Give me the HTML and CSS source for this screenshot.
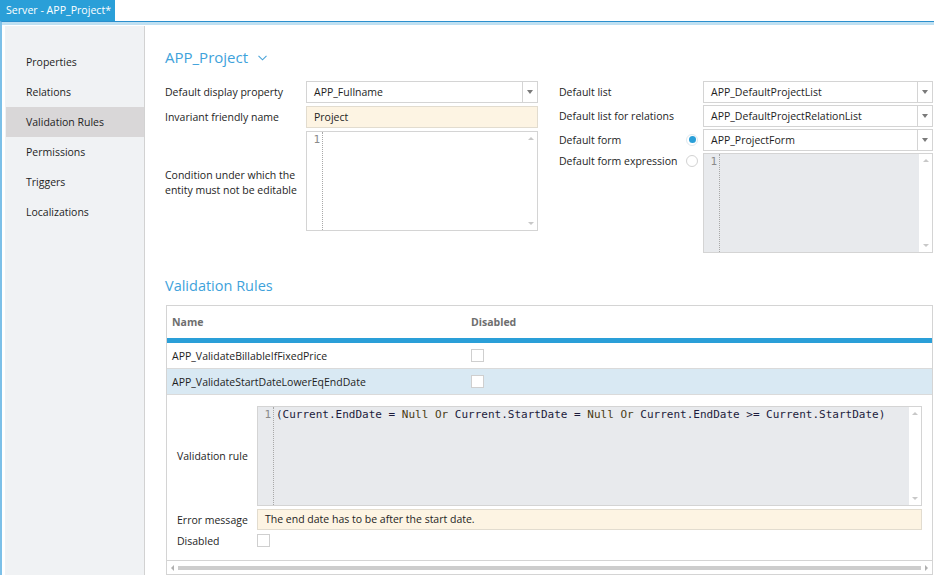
FILE: index.html
```html
<!DOCTYPE html>
<html>
<head>
<meta charset="utf-8">
<link rel="stylesheet" href="styles.css">
</head>
<body>
<div class="tabbar"><div class="tab">Server - APP_Project*</div></div>
<div class="frame">
  <nav class="sidebar">
    <div class="nav-item">Properties</div>
    <div class="nav-item">Relations</div>
    <div class="nav-item active">Validation Rules</div>
    <div class="nav-item">Permissions</div>
    <div class="nav-item">Triggers</div>
    <div class="nav-item">Localizations</div>
  </nav>
  <main class="main">
    <h1 class="title">APP_Project <svg class="chev" width="9" height="6" viewBox="0 0 9 6"><polyline points="0.5,0.8 4.5,4.8 8.5,0.8" fill="none" stroke="#4aa3d8" stroke-width="1.1"/></svg></h1>

    <div class="form">
      <div class="col col-left">
        <div class="label">Default display property</div>
        <div class="select"><span class="val">APP_Fullname</span><span class="drop"><i class="tri"></i></span></div>
        <div class="label">Invariant friendly name</div>
        <div class="input yellow">Project</div>
        <div class="label two-line">Condition under which the<br>entity must not be editable</div>
        <div class="editor white"><div class="gutter">1</div><div class="code"></div><div class="vscroll"><i class="up"></i><i class="down"></i></div></div>
      </div>
      <div class="col col-right">
        <div class="label">Default list</div>
        <div class="select"><span class="val">APP_DefaultProjectList</span><span class="drop"><i class="tri"></i></span></div>
        <div class="label">Default list for relations</div>
        <div class="select"><span class="val">APP_DefaultProjectRelationList</span><span class="drop"><i class="tri"></i></span></div>
        <div class="label with-radio">Default form<span class="radio on"></span></div>
        <div class="select"><span class="val">APP_ProjectForm</span><span class="drop"><i class="tri"></i></span></div>
        <div class="label with-radio top">Default form expression<span class="radio"></span></div>
        <div class="editor gray"><div class="gutter">1</div><div class="code"></div><div class="vscroll"><i class="up"></i><i class="down"></i></div></div>
      </div>
    </div>

    <h2 class="section">Validation Rules</h2>

    <div class="table">
      <div class="thead">
        <div class="c-name">Name</div>
        <div class="c-dis">Disabled</div>
      </div>
      <div class="bluebar"></div>
      <div class="row">
        <div class="c-name">APP_ValidateBillableIfFixedPrice</div>
        <div class="c-dis"><span class="check"></span></div>
      </div>
      <div class="row selected">
        <div class="c-name">APP_ValidateStartDateLowerEqEndDate</div>
        <div class="c-dis"><span class="check"></span></div>
      </div>
      <div class="detail">
        <div class="dlabel mid">Validation rule</div>
        <div class="editor gray big"><div class="gutter">1</div><div class="code">(Current.EndDate = <span class="kw">Null</span> <span class="kw">Or</span> Current.StartDate = <span class="kw">Null</span> <span class="kw">Or</span> Current.EndDate &gt;= Current.StartDate)</div><div class="vscroll"><i class="up"></i><i class="down"></i></div></div>
        <div class="dlabel">Error message</div>
        <div class="input yellow">The end date has to be after the start date.</div>
        <div class="dlabel dis">Disabled</div>
        <div class="dcheck"><span class="check"></span></div>
      </div>
      <div class="hscroll"><i class="left"></i><span class="thumb"></span><i class="right"></i></div>
    </div>
  </main>
</div>
</body>
</html>
```
FILE: styles.css
```css
* { box-sizing: border-box; }
html, body { margin: 0; padding: 0; }
body {
  width: 934px;
  height: 575px;
  overflow: hidden;
  background: #fff;
  font-family: "Open Sans", "Noto Sans", sans-serif;
  font-size: 10.5px;
  color: #1e1e1e;
}
.tabbar { height: 21px; display: flex; }
.tab {
  width: 115px;
  background: #2a9fd8;
  color: #fff;
  font-size: 10.6px;
  line-height: 21px;
  padding-left: 6px;
  white-space: nowrap;
  overflow: hidden;
}
.frame {
  display: flex;
  height: 554px;
  border-top: 1px solid #2b8fcd;
  border-left: 2px solid #7cc0e8;
  position: relative;
}
.frame::before {
  content: "";
  position: absolute;
  left: 0; right: 0; top: 0;
  height: 3px;
  background: #bfe0f2;
}
.sidebar {
  width: 140px;
  margin-left: 3px;
  margin-top: 4px;
  background: #f0f2f4;
  border-right: 1px solid #d2d2d2;
  padding-top: 21px;
  flex-shrink: 0;
}
.nav-item {
  height: 30px;
  line-height: 30px;
  padding-left: 21px;
  color: #1e1e1e;
}
.nav-item.active { background: #d9d7d8; margin-left: 1px; padding-left: 20px; }

.main {
  flex: 1;
  padding: 22px 0 0 20px;
  margin-top: 3px;
}
.title {
  margin: 0;
  font-weight: normal;
  font-size: 15px;
  color: #3ea2db;
  line-height: 20px;
  height: 20px;
  display: flex;
  align-items: center;
}
.chev { margin-left: 10px; margin-top: 1px; }

.form {
  display: flex;
  margin-top: 14px;
  gap: 21px;
}
.col {
  display: grid;
  align-content: start;
}
.col-left { grid-template-columns: 141px 232px; row-gap: 3px; }
.col-right { grid-template-columns: 144px 230px; row-gap: 2px; }
.label {
  height: 22px;
  line-height: 22px;
  white-space: nowrap;
}
.label.two-line {
  height: auto;
  line-height: 15px;
  align-self: center;
  margin-top: 4px;
}
.label.with-radio { position: relative; }
.label.top { align-self: start; height: 18px; line-height: 16px; }
.radio {
  position: absolute;
  right: 5px;
  top: 5px;
  width: 12px;
  height: 12px;
  border-radius: 50%;
  border: 1px solid #d2d2d2;
  background: #fff;
}
.label.top .radio { top: 2px; }
.radio.on { border-color: #dfe8ee; }
.radio.on::after {
  content: "";
  position: absolute;
  left: 1.5px; top: 0.5px;
  width: 7px; height: 7px;
  border-radius: 50%;
  background: #2a9fd8;
}
.select {
  height: 22px;
  border: 1px solid #d4d4d4;
  display: flex;
  align-items: center;
  background: #fff;
}
.select .val { flex: 1; padding-left: 7px; white-space: nowrap; }
.select .drop {
  width: 15px;
  height: 100%;
  border-left: 1px solid #d4d4d4;
  display: flex;
  align-items: center;
  justify-content: center;
}
.tri {
  width: 0; height: 0;
  border-left: 3px solid transparent;
  border-right: 3px solid transparent;
  border-top: 4px solid #7a7a7a;
}
.input {
  height: 22px;
  line-height: 20px;
  border: 1px solid #e2dccf;
  padding-left: 7px;
  white-space: nowrap;
}
.input.yellow { background: #fdf4e3; }

.editor {
  height: 100px;
  border: 1px solid #d4d4d4;
  display: flex;
  font-family: "DejaVu Sans Mono", "Liberation Mono", monospace;
  font-size: 11px;
}
.editor.white { background: #fff; }
.editor.gray { background: #e8eaed; }
.gutter {
  width: 16px;
  text-align: right;
  padding-right: 2px;
  color: #8a8a8a;
  border-right: 1px dotted #a8a8a8;
  line-height: 16px;
  flex-shrink: 0;
}
.code {
  flex: 1;
  padding-left: 2px;
  line-height: 16px;
  color: #1c1c3c;
  white-space: pre;
  overflow: hidden;
}
.kw { color: #4a3c14; }
.vscroll {
  width: 13px;
  background: #fff;
  display: flex;
  flex-direction: column;
  justify-content: space-between;
  align-items: center;
  padding: 5px 0;
  flex-shrink: 0;
}
.editor.white .vscroll { background: transparent; }
.vscroll .up {
  width: 0; height: 0;
  border-left: 3px solid transparent;
  border-right: 3px solid transparent;
  border-bottom: 3px solid #c8c8c8;
}
.vscroll .down {
  width: 0; height: 0;
  border-left: 3px solid transparent;
  border-right: 3px solid transparent;
  border-top: 3px solid #c8c8c8;
}

.section {
  margin: 24px 0 0 0;
  font-weight: normal;
  font-size: 14.5px;
  color: #3ea2db;
  line-height: 18px;
}
.table {
  margin-top: 10px;
  margin-left: 1px;
  width: 767px;
  border: 1px solid #d4d4d4;
}
.thead {
  height: 32px;
  display: flex;
  align-items: center;
  font-weight: bold;
  color: #6e6e6e;
}
.thead, .row { padding-left: 5px; }
.c-name { width: 299px; }
.c-dis { flex: 1; display: flex; align-items: center; }
.bluebar { height: 5px; background: #2a9fd8; }
.row {
  height: 26px;
  display: flex;
  align-items: center;
  border-bottom: 1px solid #dadada;
}
.row.selected { background: #d9e9f3; }
.check {
  width: 13px;
  height: 13px;
  border: 1px solid #cfcfcf;
  background: #fff;
  display: inline-block;
}
.detail {
  display: grid;
  grid-template-columns: 80px 665px;
  row-gap: 3px;
  padding: 11px 0 12px 10px;
  border-bottom: 1px solid #d4d4d4;
}
.dlabel { height: 22px; line-height: 22px; white-space: nowrap; }
.dlabel.mid { align-self: center; }
.detail .editor.big { height: 100px; }
.detail .editor .vscroll { width: 12px; }
.dlabel.dis { height: 14px; line-height: 14px; }
.dcheck { height: 14px; display: flex; }
.detail .input { height: 21px; line-height: 19px; }
.hscroll {
  height: 13px;
  display: flex;
  align-items: center;
  padding: 0 4px;
  gap: 4px;
}
.hscroll .thumb { flex: 1; height: 4px; background: #cdcdcd; }
.hscroll .left {
  width: 0; height: 0;
  border-top: 3px solid transparent;
  border-bottom: 3px solid transparent;
  border-right: 3px solid #b0b0b0;
}
.hscroll .right {
  width: 0; height: 0;
  border-top: 3px solid transparent;
  border-bottom: 3px solid transparent;
  border-left: 3px solid #b0b0b0;
}
```
